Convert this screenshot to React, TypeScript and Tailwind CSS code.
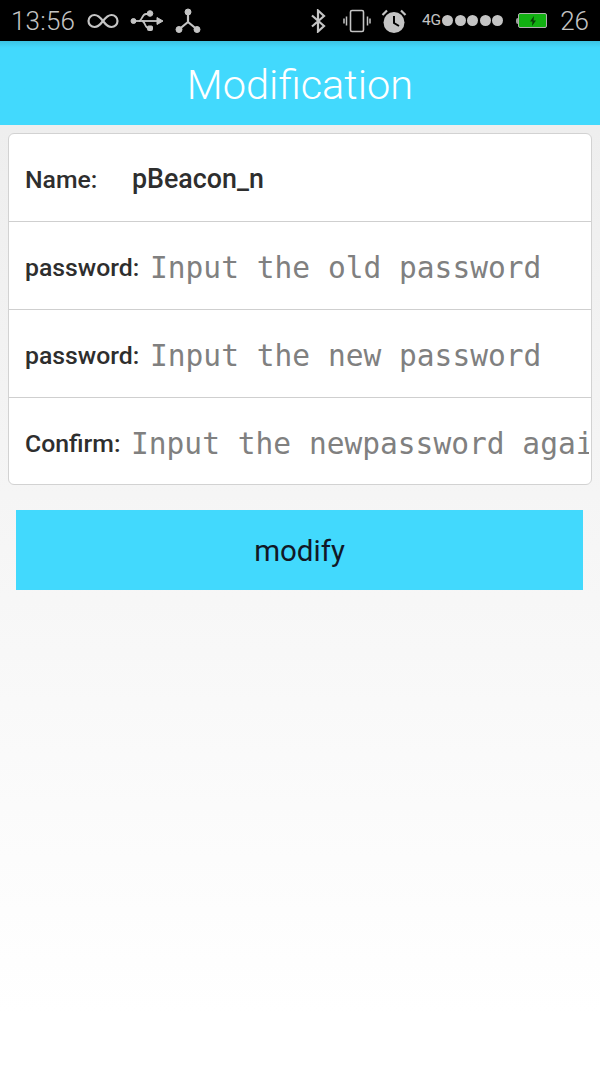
import React from "react";

const inputCls =
  "min-w-0 flex-1 bg-transparent text-[29.55px] leading-[40px] tracking-normal text-[#808080] outline-none placeholder:text-[#808080] [font-family:'DejaVu_Sans_Mono',monospace]";

function Row({ label, placeholder, last, labelW }: { label: string; placeholder: string; last?: boolean; labelW: string }) {
  return (
    <div className={`flex items-center pl-[16px] pr-[2px] ${last ? "h-[86px] pt-[6px]" : "h-[88px] border-b border-[#cfcfcf] pt-[4px]"}`}>
      <span className={`${labelW} shrink-0 text-[24.8px] font-medium text-[#2e2e2e]`}>{label}</span>
      <input className={inputCls} placeholder={placeholder} />
    </div>
  );
}

function StatusIcons() {
  return (
    <div className="flex h-[41px] shrink-0 items-center bg-black pl-[11px] pr-[11px] text-[#c4c4c4]">
      <span className="text-[26px] font-light leading-none tracking-[0.2px]">13:56</span>
      <svg className="ml-[12px]" width="32" height="18" viewBox="0 0 32 18" fill="none" stroke="#c4c4c4" strokeWidth="2.2">
        <path d="M16 9c-3-4-5.5-6-8.5-6a6 6 0 0 0 0 12c3 0 5.500-2 8.500-6s5.500-6 8.500-6a6 6 0 0 1 0 12c-3 0-5.500-2-8.500-6z" />
      </svg>
      <svg className="ml-[11px]" width="34" height="24" viewBox="0 0 34 24" fill="#c4c4c4" stroke="#c4c4c4">
        <circle cx="3.500" cy="12" r="2.500" />
        <path d="M3 12h27" strokeWidth="1.800" fill="none" />
        <path d="M27 8.500l6 3.500-6 3.500z" />
        <path d="M9 12c3 0 3-7 7-7h3M12 12c3 0 3 7 6 7h1" strokeWidth="1.800" fill="none" />
        <circle cx="20" cy="4.500" r="2.800" />
        <rect x="17.500" y="17" width="5" height="4.500" rx="1" />
      </svg>
      <svg className="ml-[11px]" width="26" height="26" viewBox="0 0 26 26" fill="#c4c4c4" stroke="#c4c4c4">
        <path d="M13 4v10M13 14L4.500 21M13 14l8.500 7" strokeWidth="2.200" fill="none" />
        <circle cx="13" cy="4" r="3" />
        <circle cx="4" cy="21.500" r="3" />
        <circle cx="22" cy="21.500" r="3" />
      </svg>
      <div className="flex-1" />
      <svg width="16" height="24" viewBox="0 0 16 24" fill="none" stroke="#c4c4c4" strokeWidth="2.200">
        <path d="M2 6.500l12 10.500-6 5.500V1.500l6 5.500L2 17.500" />
      </svg>
      <svg className="ml-[17px]" width="28" height="24" viewBox="0 0 28 24" fill="none" stroke="#c4c4c4">
        <rect x="7.500" y="1.500" width="13" height="21" rx="1.500" strokeWidth="1.600" />
        <path d="M3.500 7.500v9M1 9.500v5M24.500 7.500v9M27 9.500v5" strokeWidth="1.500" />
      </svg>
      <svg className="ml-[10px]" width="26" height="26" viewBox="0 0 26 26">
        <circle cx="13" cy="14.500" r="10.500" fill="#c4c4c4" />
        <path d="M13 8v7l5 3" fill="none" stroke="#000" strokeWidth="2" />
        <path d="M1.500 7L6 2.500M24.500 7L20 2.500" stroke="#c4c4c4" strokeWidth="2.200" />
      </svg>
      <span className="ml-[15px] text-[15.500px] leading-none">4G</span>
      <div className="ml-[1px] flex gap-[1.500px]">
        {[0, 1, 2, 3, 4].map((i) => (
          <span key={i} className="h-[11px] w-[11px] rounded-full bg-[#c4c4c4]" />
        ))}
      </div>
      <div className="ml-[13px] flex items-center">
        <span className="h-[6px] w-[2px] rounded-l-sm bg-[#9a9a9a]" />
        <div className="flex h-[15px] w-[29px] items-center justify-center rounded-[2px] border border-[#b0b0b0] bg-[#12b012]">
          <svg width="8" height="10" viewBox="0 0 8 10" fill="#0a3a0a">
            <path d="M5 0L1 5.500h2.500L3 10l4-5.500H4.500z" />
          </svg>
        </div>
      </div>
      <span className="ml-[13px] text-[26px] font-light leading-none">26</span>
    </div>
  );
}

export default function App() {
  return (
    <div className="flex h-[1067px] w-[600px] flex-col overflow-hidden bg-gradient-to-b from-[#eeeeee] from-[12%] to-white to-[95%] [font-family:Roboto,sans-serif]">
      <StatusIcons />
      <header className="flex h-[84px] shrink-0 items-center justify-center bg-gradient-to-b from-[#3cc4e4] via-[#42d9fd] via-[8%] to-[#42d9fd] pt-[4px] text-[41.500px] font-light text-white">
        Modification
      </header>
      <main className="flex flex-col pt-[8px]">
        <section className="mx-[8px] rounded-[6px] border border-[#d2d2d2] bg-white">
          <div className="flex h-[88px] items-center border-b border-[#cfcfcf] pl-[16px] pt-[4px]">
            <span className="w-[107px] shrink-0 text-[24.8px] font-medium text-[#2e2e2e]">Name:</span>
            <span className="text-[26.800px] font-medium text-[#2e2e2e]">pBeacon_n</span>
          </div>
          <Row label="password:" placeholder="Input the old password" labelW="w-[125px]" />
          <Row label="password:" placeholder="Input the new password" labelW="w-[125px]" />
          <Row label="Confirm:" placeholder="Input the newpassword again" labelW="w-[106px]" last />
        </section>
        <button className="ml-[16px] mr-[17px] mt-[25px] flex h-[80px] items-center justify-center bg-[#42d9fd] pt-[3px] text-[29.500px] text-[#111827]">
          modify
        </button>
      </main>
    </div>
  );
}
